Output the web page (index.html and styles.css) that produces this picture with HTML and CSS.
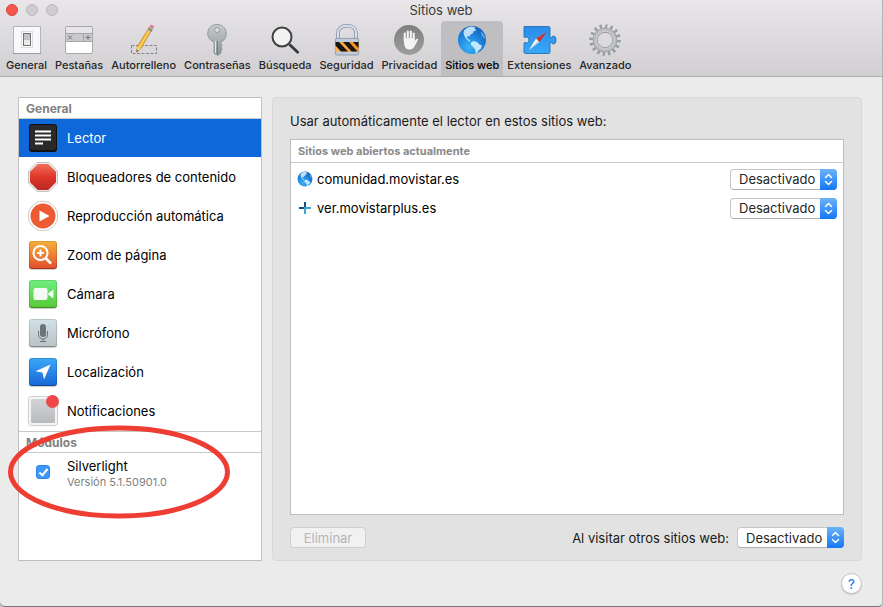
FILE: index.html
```
<!DOCTYPE html>
<html lang="es">
    <head>
        <meta charset="UTF-8">
        <meta name="viewport" content="width=device-width, initial-scale=1">
        <title>Sitios web</title>
        <link rel="stylesheet" href="styles.css">
    </head>
    <body>
        <!-- degradados y símbolos compartidos -->
        <svg class="defs" width="0" height="0" aria-hidden="true">
            <defs>
                <radialGradient id="gGlobe" cx="0.4" cy="0.75" r="0.8">
                    <stop offset="0" stop-color="#39b4f5"/>
                    <stop offset="0.55" stop-color="#1f84dc"/>
                    <stop offset="1" stop-color="#1560b4"/>
                </radialGradient>
                <linearGradient id="gSteel" x1="0" y1="0" x2="0" y2="1">
                    <stop offset="0" stop-color="#c4ccce"/>
                    <stop offset="1" stop-color="#8f9698"/>
                </linearGradient>
                <linearGradient id="gBlock" x1="0" y1="0" x2="0" y2="1">
                    <stop offset="0" stop-color="#f0705a"/>
                    <stop offset="0.5" stop-color="#e0352b"/>
                    <stop offset="1" stop-color="#b92a22"/>
                </linearGradient>
                <linearGradient id="gPuzzle" x1="0" y1="0" x2="0" y2="1">
                    <stop offset="0" stop-color="#2b8ce8"/>
                    <stop offset="1" stop-color="#38a8fa"/>
                </linearGradient>
                <linearGradient id="gHand" x1="0" y1="0" x2="0" y2="1">
                    <stop offset="0" stop-color="#7f7f80"/>
                    <stop offset="1" stop-color="#9d9d9e"/>
                </linearGradient>
                <linearGradient id="gBrass" x1="0" y1="0" x2="1" y2="0">
                    <stop offset="0" stop-color="#ffb64e"/>
                    <stop offset="1" stop-color="#f38b1c"/>
                </linearGradient>
            </defs>
            <symbol id="globe" viewBox="0 0 30 30">
                <circle cx="15" cy="15" r="14" fill="url(#gGlobe)"/>
                <path d="M7 5.500C9 3 11 2 14 1.500L18 2L17.500 3.500L19 4.500L18 6.200L16.500 6.200L15.800 8.500L13.500 9.500L12.800 11.500L10.500 11L10 13L12.500 15L13.500 17L11.500 16.300L8.500 13L7 10L6.500 7.500Z" fill="#b9e0f8"/>
                <path d="M14 17.500L16.500 16L20 17L22.500 19.500L25 20.500L24 23.500L21.500 25.500L20 28L18.500 28.300L18.300 24.500L16 22L14 20Z" fill="#c5e6f9"/>
                <path d="M24 6L26 8.500L28 12L28.500 14L26.500 12.500L24.500 10Z" fill="#5badea"/>
            </symbol>
            <symbol id="arrows" viewBox="0 0 17 21">
                <path d="M5.500 8.500L8.500 5.500L11.500 8.500M5.500 12.500L8.500 15.500L11.500 12.500" fill="none" stroke="#fff" stroke-width="1.500" stroke-linecap="round" stroke-linejoin="round"/>
            </symbol>
        </svg>

        <div class="window">
            <header class="header">
                <div class="titlebar">
                    <div class="lights">
                        <button class="light close" type="button" aria-label="Cerrar"></button>
                        <button class="light" type="button" aria-label="Minimizar"></button>
                        <button class="light" type="button" aria-label="Ampliar"></button>
                    </div>
                    <h1 class="title">Sitios web</h1>
                </div>
                <nav class="toolbar">
                    <button class="tool" type="button">
                        <svg width="32" height="32" viewBox="0 0 32 32">
                            <rect x="2.500" y="2.500" width="27" height="27" fill="#f8f9fa" stroke="#b5b5b7"/>
                            <path d="M2 29.500H30" stroke="#98999b"/>
                            <rect x="10.500" y="7.500" width="11" height="16" fill="#fff" stroke="#dadcde"/>
                            <rect x="12.500" y="9.500" width="7" height="12" fill="#e9eaec" stroke="#6e7072"/>
                            <rect x="13" y="10" width="6" height="6" fill="#c1c3c6"/>
                        </svg>
                        <span>General</span>
                    </button>
                    <button class="tool" type="button">
                        <svg width="32" height="32" viewBox="0 0 32 32">
                            <rect x="2.500" y="2.500" width="27" height="27" rx="1.500" fill="#fff" stroke="#a9a9ab"/>
                            <rect x="3" y="3" width="26" height="6" fill="#e6e4e6"/>
                            <rect x="3" y="9" width="26" height="9" fill="#c9c8ca"/>
                            <path d="M2 9.500H30M2 17.500H30M20.500 9V18" stroke="#a6a6a8"/>
                            <path d="M5 11.500L9 15.500M9 11.500L5 15.500M22.500 13.500H27.500M25 11V16" stroke="#77777a"/>
                        </svg>
                        <span>Pestañas</span>
                    </button>
                    <button class="tool" type="button">
                        <svg width="32" height="32" viewBox="0 0 32 32">
                            <rect x="3.500" y="21.500" width="25" height="8" fill="none" stroke="#858587" stroke-dasharray="3 1.500"/>
                            <path d="M21.500 3L24.500 4.600L12.800 24.800L8.500 28L9.300 22.600Z" fill="#f8b92f" stroke="#a8791d" stroke-width="0.600"/>
                            <path d="M22.500 4L11.500 23.500" stroke="#ffe07a" stroke-width="1"/>
                            <path d="M9.300 22.600L12.800 24.800L8.500 28Z" fill="#ecd0a0"/>
                            <path d="M8.900 25.800L10.300 26.700L8.500 28Z" fill="#333"/>
                            <path d="M20.400 4.600L24.200 6.800" stroke="#87949e" stroke-width="2.500"/>
                            <path d="M21.600 2.300Q22.500 0 24.700 1.300Q26.800 2.600 25.300 4.500Z" fill="#e2789b"/>
                        </svg>
                        <span>Autorrelleno</span>
                    </button>
                    <button class="tool" type="button">
                        <svg width="32" height="32" viewBox="0 0 32 32">
                            <path fill-rule="evenodd" d="M16 0.500C21.500 0.500 25.300 4.500 25.300 9.700C25.300 13.700 23 16.600 20 18V19.500L21 21L20 23L21 25L20 27V29L16.700 31.500L13 29V18C9.500 16.500 6.700 13.700 6.700 9.700C6.700 4.500 10.500 0.500 16 0.500ZM16 3.500A2.500 2.500 0 1 0 16 8.500A2.500 2.500 0 1 0 16 3.500Z" fill="url(#gSteel)" stroke="#7f8688" stroke-width="0.700"/>
                            <path d="M16.500 17V30" stroke="#727a7c"/>
                            <path d="M14.500 17V29" stroke="#e4eaeb"/>
                        </svg>
                        <span>Contraseñas</span>
                    </button>
                    <button class="tool" type="button">
                        <svg width="32" height="32" viewBox="0 0 32 32">
                            <path d="M20.500 20.500L29.500 29" stroke="#39393b" stroke-width="2.800"/>
                            <circle cx="13" cy="13" r="9.500" fill="#f1f1f2" stroke="#3f3f41" stroke-width="2"/>
                        </svg>
                        <span>Búsqueda</span>
                    </button>
                    <button class="tool" type="button">
                        <svg width="32" height="32" viewBox="0 0 32 32">
                            <path d="M7 15V9.500C7 4.500 10.500 1.800 16 1.800S25 4.500 25 9.500V15" fill="none" stroke="#8795a9" stroke-width="3.600"/>
                            <path d="M7 15V9.500C7 4.500 10.500 1.800 16 1.800S25 4.500 25 9.500V15" fill="none" stroke="#d8e0ec" stroke-width="2"/>
                            <rect x="4.400" y="14.400" width="23.200" height="16.600" rx="1.500" fill="#c0cad8" stroke="#8391a4" stroke-width="0.800"/>
                            <rect x="4.500" y="18" width="23" height="9.500" fill="url(#gBrass)"/>
                            <path d="M4.500 18H8L17 27.500H10L4.500 21.500ZM12 18H18L26.500 27.500H20.500ZM22 18H27.500V24Z" fill="#191611"/>
                        </svg>
                        <span>Seguridad</span>
                    </button>
                    <button class="tool" type="button">
                        <svg width="32" height="32" viewBox="0 0 32 32">
                            <circle cx="16" cy="16" r="15" fill="url(#gHand)"/>
                            <path d="M11.800 17V9.500M14.800 15V7.500M17.800 15V7.500M20.600 16V9.500" stroke="#f4f4f4" stroke-width="2.200" stroke-linecap="round"/>
                            <path d="M10.700 14H21.700V17L23.200 15.200Q24.800 14.300 25.100 15.700L21.500 22.500Q20 25.500 16.500 25.500Q12.500 25.500 11.300 21Z" fill="#f4f4f4"/>
                            <path d="M13.300 10V14.500M16.300 9V14.500M19.200 10V14.500" stroke="#a0a0a1" stroke-width="0.700"/>
                        </svg>
                        <span>Privacidad</span>
                    </button>
                    <button class="tool active" type="button" aria-current="page">
                        <svg width="32" height="32" viewBox="0 0 32 32"><use href="#globe" x="1" y="1" width="30" height="30"/></svg>
                        <span>Sitios web</span>
                    </button>
                    <button class="tool" type="button">
                        <svg width="36" height="32" viewBox="0 0 36 32">
                            <path d="M3 2.500H27.500Q29 2.500 29 4V13.500H30.500Q31 12 33 12Q35 12.500 35 16Q35 19.500 33 20Q31 20 30.500 18.500H29V28Q29 29.500 27.500 29.500H4.500Q3 29.500 3 28V19Q4 18 5.500 19Q8 19 8 16Q8 13 5.500 13Q4 13.800 3 13Z" fill="url(#gPuzzle)" stroke="#1767b0" stroke-width="0.800"/>
                            <path d="M25.500 8L18.500 18L15 14.500Z" fill="#e3352c"/>
                            <path d="M8 26L15 14.500L18.500 18Z" fill="#f7f8f9"/>
                            <path d="M8 26L25.500 8L18.500 18Z" fill="#000" opacity="0.150"/>
                        </svg>
                        <span>Extensiones</span>
                    </button>
                    <button class="tool" type="button">
                        <svg width="32" height="32" viewBox="0 0 32 32">
                            <circle cx="16" cy="16" r="13.800" pathLength="64" fill="none" stroke="#989d9f" stroke-width="4" stroke-dasharray="1.800 2.200"/>
                            <circle cx="16" cy="16" r="9.800" fill="none" stroke="#92979a" stroke-width="5"/>
                            <circle cx="16" cy="16" r="9.800" fill="none" stroke="#b9bdbf" stroke-width="3.800"/>
                            <circle cx="16" cy="16" r="9" fill="none" stroke="#d0d3d4" stroke-width="1"/>
                        </svg>
                        <span>Avanzado</span>
                    </button>
                </nav>
            </header>

            <main class="content">
                <aside class="sidebar">
                    <h2 class="group">General</h2>
                    <ul class="list">
                        <li><button class="row selected" type="button">
                            <svg width="32" height="32" viewBox="0 0 32 32">
                                <rect x="2" y="2" width="28" height="28" rx="3" fill="#111"/>
                                <rect x="3" y="3" width="26" height="25" rx="2" fill="#2a2a2b"/>
                                <path d="M8 9.500H24M8 13.500H24M8 17.500H24M8 21.500H16" stroke="#fff" stroke-width="2"/>
                            </svg>
                            <span>Lector</span>
                        </button></li>
                        <li><button class="row" type="button">
                            <svg width="32" height="32" viewBox="0 0 32 32">
                                <path d="M10 1.500H22L30.500 10V22L22 30.500H10L1.500 22V10Z" fill="#ececec" stroke="#c4c4c4"/>
                                <path d="M10.800 3H21.200L29 10.800V21.200L21.200 29H10.800L3 21.200V10.800Z" fill="url(#gBlock)"/>
                            </svg>
                            <span>Bloqueadores de contenido</span>
                        </button></li>
                        <li><button class="row" type="button">
                            <svg width="32" height="32" viewBox="0 0 32 32">
                                <circle cx="16" cy="16" r="14.800" fill="#fff" stroke="#cbcbcb"/>
                                <circle cx="16" cy="16" r="12.500" fill="#ee5a31"/>
                                <path d="M12.500 10.500L22.500 16L12.500 21.500Z" fill="#fff"/>
                            </svg>
                            <span>Reproducción automática</span>
                        </button></li>
                        <li><button class="row" type="button">
                            <span class="tile orange">
                                <svg width="28" height="28" viewBox="0 0 28 28" fill="none" stroke="#fff" stroke-width="2">
                                    <circle cx="11.500" cy="12" r="7"/>
                                    <path d="M16.500 17L22 22.500" stroke-width="2.500"/>
                                    <path d="M8 12H15M11.500 8.500V15.500"/>
                                </svg>
                            </span>
                            <span>Zoom de página</span>
                        </button></li>
                        <li><button class="row" type="button">
                            <span class="tile green">
                                <svg width="28" height="28" viewBox="0 0 28 28" fill="#f4f9f3">
                                    <rect x="4.500" y="8" width="14" height="12" rx="2"/>
                                    <path d="M19 13.500L24.500 9.500V18.500L19 14.500Z"/>
                                </svg>
                            </span>
                            <span>Cámara</span>
                        </button></li>
                        <li><button class="row" type="button">
                            <span class="tile silver">
                                <svg width="28" height="28" viewBox="0 0 28 28" fill="none" stroke="#6d7477">
                                    <rect x="11" y="5" width="6" height="13" rx="3" fill="#6d7477" stroke="none"/>
                                    <path d="M9.500 12V15.500C9.500 21.500 18.500 21.500 18.500 15.500V12M14 20V22.500M11 22.500H17"/>
                                </svg>
                            </span>
                            <span>Micrófono</span>
                        </button></li>
                        <li><button class="row" type="button">
                            <span class="tile blue">
                                <svg width="28" height="28" viewBox="0 0 28 28">
                                    <path d="M21.500 6.500L15 21.500L13.500 14.500L6.500 13.300Z" fill="#fff"/>
                                </svg>
                            </span>
                            <span>Localización</span>
                        </button></li>
                        <li><button class="row" type="button">
                            <span class="tile notify"></span>
                            <span>Notificaciones</span>
                        </button></li>
                    </ul>
                    <section class="modules">
                        <h2 class="group group2">Módulos</h2>
                        <label class="plugin" for="silverlight">
                            <input class="check" type="checkbox" id="silverlight" checked>
                            <span class="name">Silverlight</span>
                            <span class="version">Versión 5.1.50901.0</span>
                        </label>
                        <!-- círculo rojo que señala el módulo -->
                        <svg class="mark" width="224" height="94" viewBox="0 0 224 94" aria-hidden="true">
                            <ellipse cx="112" cy="47" rx="108.500" ry="44" fill="none" stroke="#ee3d33" stroke-width="5"/>
                        </svg>
                    </section>
                </aside>

                <section class="panel">
                    <p class="intro">Usar automáticamente el lector en estos sitios web:</p>
                    <div class="sites">
                        <table class="table">
                            <thead>
                                <tr><th colspan="2">Sitios web abiertos actualmente</th></tr>
                            </thead>
                            <tbody>
                                <tr>
                                    <td>
                                        <div class="site">
                                            <svg width="16" height="16"><use href="#globe" width="16" height="16"/></svg>
                                            <label for="site1">comunidad.movistar.es</label>
                                        </div>
                                    </td>
                                    <td class="value">
                                        <span class="popup">
                                            <select id="site1"><option>Desactivado</option><option>Activado</option></select>
                                            <svg width="17" height="21"><use href="#arrows"/></svg>
                                        </span>
                                    </td>
                                </tr>
                                <tr>
                                    <td>
                                        <div class="site">
                                            <svg width="16" height="16" viewBox="0 0 16 16" fill="none" stroke-width="2">
                                                <path d="M2 8H8M8 2V8" stroke="#1c4d80"/>
                                                <path d="M8 8H14M8 7V14" stroke="#3fa3d3"/>
                                            </svg>
                                            <label for="site2">ver.movistarplus.es</label>
                                        </div>
                                    </td>
                                    <td class="value">
                                        <span class="popup">
                                            <select id="site2"><option>Desactivado</option><option>Activado</option></select>
                                            <svg width="17" height="21"><use href="#arrows"/></svg>
                                        </span>
                                    </td>
                                </tr>
                            </tbody>
                        </table>
                    </div>
                    <div class="actions">
                        <button class="remove" type="button" disabled>Eliminar</button>
                        <label class="others" for="others">Al visitar otros sitios web:</label>
                        <span class="popup">
                            <select id="others"><option>Desactivado</option><option>Activado</option></select>
                            <svg width="17" height="21"><use href="#arrows"/></svg>
                        </span>
                    </div>
                </section>
            </main>

            <footer class="footer">
                <button class="help" type="button" aria-label="Ayuda">?</button>
            </footer>
        </div>
    </body>
</html>
```

FILE: styles.css
```
*, *::before, *::after{
    box-sizing: border-box;
}
body{
    margin: 0;
    background: #c9c9c9;
    font-family: Inter, "Liberation Sans", sans-serif;
    font-size: 13px;
    line-height: 16px;
    color: #1a1a1a;
}
button, select{
    font: inherit;
    color: inherit;
}
h1, h2, p, ul{
    margin: 0;
    padding: 0;
}
svg{
    display: block;
    flex: none;
}
.defs{
    position: absolute;
}

/* ventana */
.window{
    display: flex;
    flex-direction: column;
    min-height: 100vh;
    background: #ebebeb;
    border-right: 1px solid #b4b4b4;
    border-bottom: 1px solid #777;
    border-radius: 0 0 5px 5px;
}

/* cabecera */
.header{
    background: linear-gradient(#e8e6e8, #d1cfd1);
    border-bottom: 1px solid #adadad;
}
.titlebar{
    display: grid;
    grid-template-columns: 1fr auto 1fr;
    align-items: center;
    height: 21px;
    padding-bottom: 1px;
}
.lights{
    display: flex;
    gap: 8px;
    padding-left: 6px;
}
.light{
    width: 12px;
    height: 12px;
    padding: 0;
    border: 1px solid #b9b7b9;
    border-radius: 50%;
    background: #cecccf;
}
.close{
    border-color: #e0443e;
    background: #f4574f;
}
.title{
    font-size: 13px;
    font-weight: 400;
    color: #3a3a3a;
}
.toolbar{
    display: flex;
    padding-left: 2px;
}
.tool{
    display: flex;
    flex-direction: column;
    align-items: center;
    gap: 2px;
    height: 55px;
    padding: 3px 4px 0;
    border: 0;
    border-radius: 4px 4px 0 0;
    background: none;
    font-size: 11px;
    font-weight: 500;
    line-height: 14px;
    color: #262626;
}
.tool.active{
    background: #bfbec0;
    color: #000;
}

/* zona central */
.content{
    flex: 1;
    display: grid;
    grid-template-columns: 244px 1fr;
    gap: 10px;
    padding: 20px 20px 0 18px;
}
.sidebar{
    border: 1px solid #bfbfbf;
    background: #fff;
}
.group{
    height: 21px;
    padding-left: 7px;
    border-bottom: 1px solid #c8c8c8;
    font-size: 12px;
    font-weight: 700;
    line-height: 21px;
    color: #808080;
}
.list{
    list-style: none;
}
.list li{
    height: 39px;
}
.row{
    display: flex;
    align-items: center;
    gap: 8px;
    width: 100%;
    height: 38px;
    padding: 0 8px;
    border: 0;
    background: none;
    color: #000;
}
.row.selected{
    background: #0f68d9;
    color: #fff;
}
/* iconos cuadrados de la lista */
.tile{
    position: relative;
    flex: none;
    width: 28px;
    height: 28px;
    margin: 0 2px;
    border-radius: 3px;
    box-shadow: inset 0 0 0 1px rgba(0,0,0,.12), inset 0 -1px 0 rgba(0,0,0,.2), 0 1px 1px rgba(0,0,0,.2);
}
.orange{
    background: linear-gradient(#f5b13b, #e34d2e);
}
.green{
    background: linear-gradient(#6fee80, #58c935);
}
.silver{
    background: linear-gradient(#d2e2e8, #b9c2c6);
}
.blue{
    background: linear-gradient(#3ca7f6, #1766d8);
}
.notify{
    border: 2px solid #f4f4f4;
    background: linear-gradient(#d3d4d8, #b9babd);
    box-shadow: 0 0 1px 1px #ccc;
}
.notify::after{
    content: '';
    position: absolute;
    top: -4px;
    right: -4px;
    width: 13px;
    height: 13px;
    border-radius: 50%;
    background: #ee4849;
}

/* módulos */
.modules{
    position: relative;
}
.group2{
    height: 22px;
    border-top: 1px solid #c8c8c8;
}
.plugin{
    display: grid;
    grid-template-columns: 14px 1fr;
    column-gap: 17px;
    align-items: center;
    padding: 5px 17px;
    color: #000;
}
.check{
    position: relative;
    grid-row: span 2;
    appearance: none;
    width: 14px;
    height: 14px;
    margin: 0 0 4px;
    border: 1px solid #aaa;
    border-radius: 3px;
    background: #fff;
}
.check:checked{
    border-color: #2b86f3;
    background: #3e98fb;
}
.check:checked::after{
    content: '';
    position: absolute;
    left: 4px;
    top: 1px;
    width: 5px;
    height: 9px;
    border: solid #fff;
    border-width: 0 2px 2px 0;
    transform: rotate(40deg);
}
.version{
    font-size: 11px;
    color: #7f7f7f;
}
.mark{
    position: absolute;
    left: -12px;
    top: -6px;
    pointer-events: none;
}

/* panel derecho */
.panel{
    display: flex;
    flex-direction: column;
    padding: 15px 17px 12px;
    border: 1px solid #d8d8d8;
    border-radius: 4px;
    background: #e2e2e2;
}
.intro{
    margin-bottom: 10px;
}
.sites{
    flex: 1;
    border: 1px solid #bdbdbd;
    background: #fff;
}
.table{
    width: 100%;
    border-collapse: collapse;
    color: #000;
}
.table th{
    height: 22px;
    padding: 1px 7px 0;
    border-bottom: 1px solid #c8c8c8;
    font-size: 11px;
    font-weight: 700;
    text-align: left;
    color: #8a8a8a;
}
.table td{
    height: 29px;
    padding: 0 6px;
}
.table tbody::before{
    content: '';
    display: block;
    height: 2px;
}
.site{
    display: flex;
    align-items: center;
    gap: 4px;
}
.table .value{
    width: 120px;
}
.popup{
    position: relative;
    display: block;
    width: 107px;
    height: 21px;
    margin-left: auto;
}
.popup select{
    appearance: none;
    display: block;
    width: 100%;
    height: 100%;
    padding: 0 17px 0 8px;
    border: 1px solid #c6c6c6;
    border-bottom-color: #b0b0b0;
    border-radius: 4px;
    background: #fff;
    color: #262626;
}
.popup svg{
    position: absolute;
    top: 0;
    right: 0;
    border-radius: 0 4px 4px 0;
    background: linear-gradient(#6cb3fa, #1477f6);
    pointer-events: none;
}
.actions{
    display: flex;
    align-items: center;
    gap: 8px;
    margin-top: 12px;
}
.remove{
    width: 76px;
    height: 21px;
    padding: 0;
    border: 1px solid #cfcfcf;
    border-radius: 4px;
    background: #f1f1f1;
    color: #b5b5b5;
}
.others{
    margin-left: auto;
}
.actions .popup{
    margin-left: 0;
}

/* pie */
.footer{
    display: flex;
    justify-content: flex-end;
    padding: 12px 20px;
}
.help{
    width: 21px;
    height: 21px;
    padding: 0;
    border: 1px solid #c2c2c2;
    border-radius: 50%;
    background: #fff;
    box-shadow: 0 1px 1px rgba(0,0,0,.15);
    font-weight: 500;
    color: #1a84f5;
}
```
